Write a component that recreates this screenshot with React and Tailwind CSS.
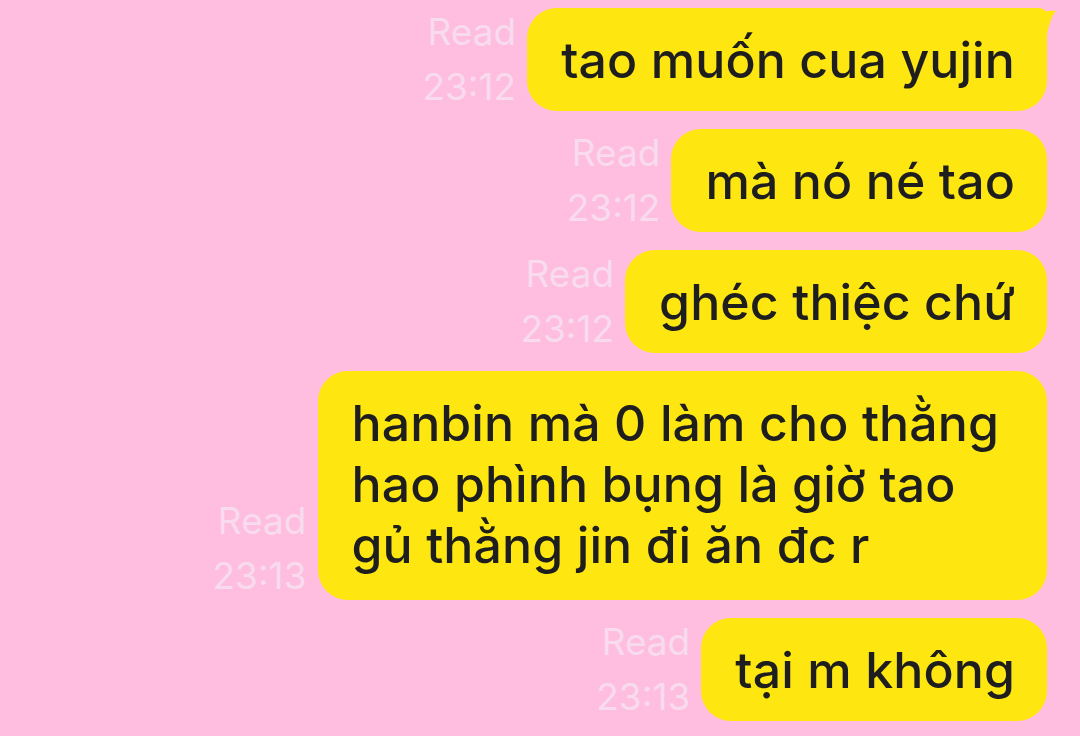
import React from "react";

const msgs = [
  { text: ["tao muốn cua yujin"], time: "23:12", tail: true },
  { text: ["mà nó né tao"], time: "23:12" },
  { text: ["ghéc thiệc chứ"], time: "23:12" },
  {
    text: ["hanbin mà 0 làm cho thằng", "hao phình bụng là giờ tao", "gủ thằng jin đi ăn đc r"],
    time: "23:13",
    multi: true,
  },
  { text: ["tại m không"], time: "23:13" },
];

export default function App() {
  return (
    <div
      className="w-[1080px] h-[736px] overflow-hidden bg-[#ffbee0] flex flex-col items-end pr-[33px] pt-[8px] gap-[18px]"
      style={{ fontFamily: "Inter, 'Noto Sans', sans-serif" }}
    >
      {msgs.map((m, i) => (
        <div key={i} className="flex items-end gap-[11px]">
          <div className="text-right text-[37px] leading-[55px] text-[#f8dbee] mt-[-4px] mb-[-3px]">
            <div>Read</div>
            <div>{m.time}</div>
          </div>
          <div
            className={
              "relative bg-[#fee710] rounded-[30px] pl-[34px] pt-[22px] text-[50px] leading-[61px] font-medium text-[#1e1e1e] tracking-[0.1px]" +
              (m.multi ? " pr-[48px] pb-[24px]" : " pr-[32px] pb-[20px]") +
              (m.tail ? " rounded-tr-[8px]" : "")
            }
          >
            {m.text.map((t, j) => (
              <div key={j} className="whitespace-nowrap">{t}</div>
            ))}
            {m.tail && (
              <svg
                className="absolute top-0"
                width="40"
                height="40"
                viewBox="0 0 40 40"
                style={{ right: -11 }}
              >
                <path d="M0 0 H10 Q15 0 18 6 Q26 2 38 3 Q30 12 27 40 L0 40 Z" fill="#fee710" />
              </svg>
            )}
          </div>
        </div>
      ))}
    </div>
  );
}
